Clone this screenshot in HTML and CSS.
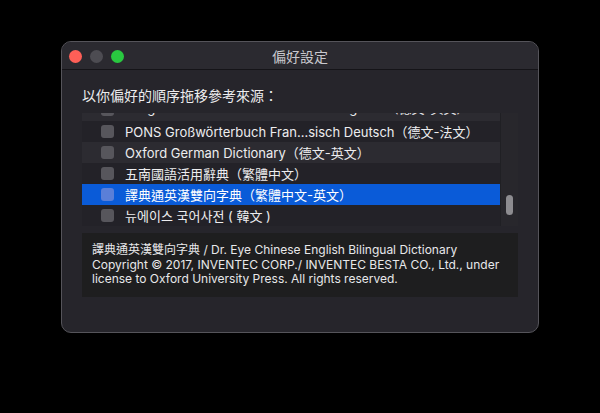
FILE: index.html
```html
<!DOCTYPE html>
<html lang="zh-Hant">
<head>
    <meta charset="UTF-8">
    <title>偏好設定</title>
    <link rel="stylesheet" href="styles.css">
</head>
<body>
    <div class="window">
        <div class="titlebar">
            <div class="lights">
                <span class="light red"></span>
                <span class="light gray"></span>
                <span class="light green"></span>
            </div>
            <div class="title">偏好設定</div>
        </div>
        <div class="content">
            <p class="label">以你偏好的順序拖移參考來源：</p>

            <!-- Liste des dictionnaires -->
            <div class="list">
                <div class="rows">
                    <div class="row partial"><span class="box"></span>Langenscheidt Handwörterbuch . Englisch（德文-英文）</div>
                    <div class="row"><span class="box"></span>PONS Großwörterbuch Fran...sisch Deutsch（德文-法文）</div>
                    <div class="row"><span class="box"></span>Oxford German Dictionary（德文-英文）</div>
                    <div class="row"><span class="box"></span>五南國語活用辭典（繁體中文）</div>
                    <div class="row selected"><span class="box"></span>譯典通英漢雙向字典（繁體中文-英文）</div>
                    <div class="row"><span class="box"></span>뉴에이스 국어사전 ( 韓文 )</div>
                </div>
                <div class="scrollbar">
                    <div class="thumb"></div>
                </div>
            </div>

            <!-- Description -->
            <div class="desc">
                譯典通英漢雙向字典 / Dr. Eye Chinese English Bilingual Dictionary<br>
                Copyright © 2017, INVENTEC CORP./ INVENTEC BESTA CO., Ltd., under<br>
                license to Oxford University Press. All rights reserved.
            </div>
        </div>
    </div>
</body>
</html>
```

FILE: styles.css
```css
/* Style général */
body {
    margin: 0;
    padding: 41px 0 0 61px;
    background-color: #000;
    font-family: "Inter", "Noto Sans CJK TC", sans-serif;
    color: #e6e6e8;
}

.window {
    width: 476px;
    height: 290px;
    background-color: #26252b;
    border: 1px solid #55545a;
    border-radius: 10px;
    overflow: hidden;
    box-shadow: 0 0 0 1px #000;
}

.titlebar {
    position: relative;
    height: 27px;
    background-color: #2b2a30;
    border-bottom: 1px solid #151418;
    display: flex;
    align-items: center;
    justify-content: center;
}

.lights {
    position: absolute;
    left: 7px;
    top: 8px;
    display: flex;
    gap: 8px;
}

.light {
    width: 13px;
    height: 13px;
    border-radius: 50%;
}

.red { background-color: #fe5f57; }
.gray { background-color: #4d4c52; }
.green { background-color: #29c840; }

.title {
    font-size: 14px;
    color: #c9c8cd;
    font-family: "Noto Sans CJK TC", sans-serif;
}

.content {
    padding: 15px 20px 0 20px;
}

.label {
    margin: 0 0 8px 0;
    font-size: 14px;
    line-height: 20px;
    font-family: "Noto Sans CJK TC", sans-serif;
    color: #ececee;
}

.list {
    display: flex;
    height: 113px;
    overflow: hidden;
    background-color: #232228;
}

.rows {
    flex: 1;
}

.row {
    height: 21px;
    display: flex;
    align-items: center;
    font-size: 13px;
    color: #ededef;
    white-space: nowrap;
}

.row:nth-child(odd) {
    background-color: #2c2b31;
}

.row:nth-child(even) {
    background-color: #232228;
}

.row.partial {
    margin-top: -13px;
    align-items: flex-start;
    line-height: 16px;
}

.row.selected {
    background-color: #0a5bd8;
    color: #fff;
}

.box {
    width: 13px;
    height: 13px;
    margin: 0 11px 0 19px;
    border-radius: 3px;
    background-color: #57565c;
    flex-shrink: 0;
}

.partial .box {
    margin-top: 3px;
}

.selected .box {
    background-color: #5a7fd8;
}

.scrollbar {
    width: 17px;
    background-color: #28272c;
    border-left: 1px solid #202024;
    display: flex;
    justify-content: center;
}

.thumb {
    width: 7px;
    height: 20px;
    margin-top: 82px;
    border-radius: 4px;
    background-color: #8d8c90;
}

.desc {
    margin-top: 7px;
    height: 54px;
    padding: 10px 10px 0 10px;
    background-color: #1e1e1f;
    font-size: 12px;
    line-height: 14.5px;
    color: #e8e8ea;
}
```
